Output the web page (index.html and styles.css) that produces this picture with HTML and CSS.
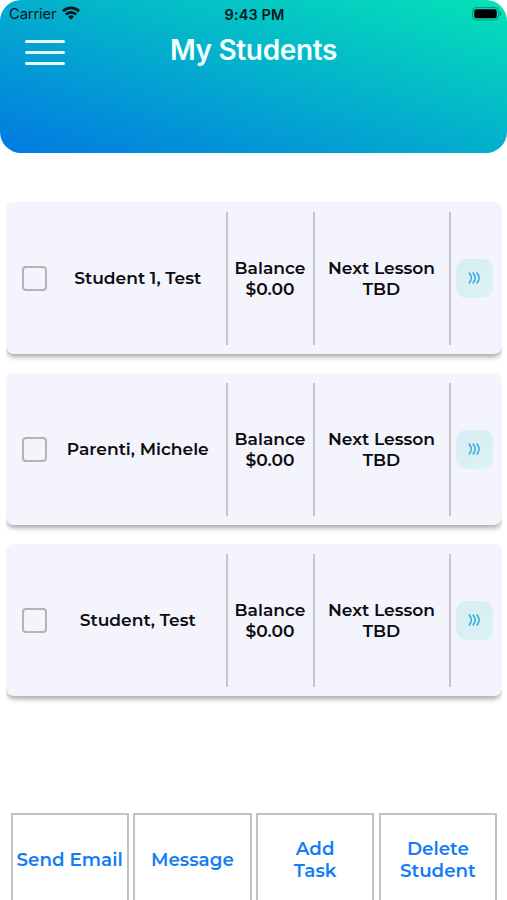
FILE: index.html
```html
<!DOCTYPE html>
<html lang="en">
<head>
<meta charset="utf-8">
<title>My Students</title>
<link rel="stylesheet" href="styles.css">
</head>
<body>
<header class="header">
  <div class="status">
    <div class="carrier"><span class="carrier-name">Carrier</span>
      <svg class="wifi" width="18" height="14" viewBox="0 0 18 14"><g fill="none" stroke="#02181d" stroke-width="2.8"><path d="M.9 5.2a11.5 11.5 0 0 1 16.2 0"/><path d="M3.9 8.5a7.2 7.2 0 0 1 10.2 0"/></g><path d="M9 13.8 6.1 10.8a4.1 4.1 0 0 1 5.8 0z" fill="#02181d"/></svg>
    </div>
    <time class="time">9:43 PM</time>
    <svg class="battery" width="30" height="14" viewBox="0 0 30 14"><rect x=".6" y=".6" width="25.8" height="12.4" rx="3.5" fill="none" stroke="#087f69" stroke-opacity=".75"/><rect x="2.3" y="2.3" width="22.4" height="9" rx="2" fill="#000"/><path d="M27.8 4.6v4.6q1.6-.7 1.6-2.3t-1.6-2.3z" fill="#087f69"/></svg>
  </div>
  <div class="titlebar">
    <button class="menu" aria-label="Menu"><i></i><i></i><i></i></button>
    <h1 class="title">My Students</h1>
  </div>
</header>
<main class="students">
  <article class="card">
    <div class="person"><span class="check"></span><span class="name">Student 1, Test</span></div>
    <div class="cell"><span>Balance</span><span>$0.00</span></div>
    <div class="cell"><span>Next Lesson</span><span>TBD</span></div>
    <div class="cell last"><button class="open" aria-label="Open"><svg width="13" height="12" viewBox="0 0 13 12" fill="none" stroke-width="1.6"><path d="M1 .5 3 4.2Q3.7 6 3 7.8L1 11.5" stroke="#45a9e4"/><path d="M4.9.5l2 3.7q.7 1.8 0 3.6l-2 3.7" stroke="#2bb7d5"/><path d="M8.8.5l2 3.7q.7 1.8 0 3.6l-2 3.7" stroke="#3aade2"/></svg></button></div>
  </article>
  <article class="card">
    <div class="person"><span class="check"></span><span class="name">Parenti, Michele</span></div>
    <div class="cell"><span>Balance</span><span>$0.00</span></div>
    <div class="cell"><span>Next Lesson</span><span>TBD</span></div>
    <div class="cell last"><button class="open" aria-label="Open"><svg width="13" height="12" viewBox="0 0 13 12" fill="none" stroke-width="1.6"><path d="M1 .5 3 4.2Q3.7 6 3 7.8L1 11.5" stroke="#45a9e4"/><path d="M4.9.5l2 3.7q.7 1.8 0 3.6l-2 3.7" stroke="#2bb7d5"/><path d="M8.8.5l2 3.7q.7 1.8 0 3.6l-2 3.7" stroke="#3aade2"/></svg></button></div>
  </article>
  <article class="card">
    <div class="person"><span class="check"></span><span class="name">Student, Test</span></div>
    <div class="cell"><span>Balance</span><span>$0.00</span></div>
    <div class="cell"><span>Next Lesson</span><span>TBD</span></div>
    <div class="cell last"><button class="open" aria-label="Open"><svg width="13" height="12" viewBox="0 0 13 12" fill="none" stroke-width="1.6"><path d="M1 .5 3 4.2Q3.7 6 3 7.8L1 11.5" stroke="#45a9e4"/><path d="M4.9.5l2 3.7q.7 1.8 0 3.6l-2 3.7" stroke="#2bb7d5"/><path d="M8.8.5l2 3.7q.7 1.8 0 3.6l-2 3.7" stroke="#3aade2"/></svg></button></div>
  </article>
</main>
<nav class="actions">
  <button class="action"><span>Send Email</span></button>
  <button class="action"><span>Message</span></button>
  <button class="action"><span>Add</span><span>Task</span></button>
  <button class="action"><span>Delete</span><span>Student</span></button>
</nav>
</body>
</html>
```
FILE: styles.css
```css
* { box-sizing: border-box; }
body {
  margin: 0;
  height: 900px;
  overflow: hidden;
  display: flex;
  flex-direction: column;
  background: #fff;
  font-family: Montserrat, Inter, sans-serif;
}
button { margin: 0; padding: 0; border: 0; background: none; font: inherit; }
.header {
  flex: none;
  height: 153px;
  border-radius: 21px;
  background: linear-gradient(to top right, #0279e2, #05e3b8);
  font-family: Inter, sans-serif;
}
.status {
  height: 28px;
  padding: 0 5px 0 9px;
  display: grid;
  grid-template-columns: 1fr auto 1fr;
  align-items: center;
  color: #02181d;
}
.carrier { display: flex; align-items: center; gap: 6px; }
.carrier-name { font-size: 14.7px; letter-spacing: -.1px; }
.wifi { margin: -2px 0 0; }
.time { margin-left: -2px; font-size: 14.5px; font-weight: 600; letter-spacing: .1px; }
.battery { justify-self: end; margin-top: -1px; }
.titlebar {
  height: 48px;
  padding: 0 25px;
  display: grid;
  grid-template-columns: 40px 1fr 40px;
  align-items: center;
}
.menu { display: flex; flex-direction: column; gap: 8px; }
.menu i { height: 3px; border-radius: 2px; background: #e3faff; }
.title {
  margin: -5px 0 0;
  text-align: center;
  font-size: 28px;
  line-height: 36px;
  font-weight: 600;
  letter-spacing: -.35px;
  color: #f4ffff;
}
.students {
  margin-top: 49px;
  padding: 0 5px 0 6px;
  display: flex;
  flex-direction: column;
  gap: 19px;
}
.card {
  height: 152px;
  padding: 10px 0 9px;
  border-radius: 8px;
  display: grid;
  grid-template-columns: 219.5px 87px 136px 1fr;
  background: #f4f4fc;
  box-shadow: 0 4px 5px -1px #aaa;
  clip-path: inset(0 0 -12px);
  color: #0c0c10;
  font-size: 17.1px;
  line-height: 21px;
  font-weight: 600;
}
.person { display: grid; grid-template-columns: 44px 1fr; align-items: center; }
.check {
  margin-left: 15.5px;
  width: 25px;
  height: 25px;
  border: 2px solid #b4b4b8;
  border-radius: 4px;
}
.name { padding-bottom: 2px; text-align: center; white-space: nowrap; }
.cell {
  padding-bottom: 2px;
  border-left: 2px solid #c4c4ca;
  display: flex;
  flex-direction: column;
  align-items: center;
  justify-content: center;
  white-space: nowrap;
}
.last { padding-bottom: 1px; }
.open {
  width: 37px;
  height: 39px;
  margin-right: 4px;
  border-radius: 11px;
  background: linear-gradient(135deg, #d8ecf4, #daf4f2);
  display: flex;
  align-items: center;
  justify-content: center;
}
.actions {
  margin: auto 10px 0 10.5px;
  height: 87px;
  flex: none;
  display: grid;
  grid-template-columns: repeat(4, 1fr);
  gap: 4.5px;
}
.action {
  height: 93px;
  border: 2px solid #c2c2c2;
  display: flex;
  flex-direction: column;
  align-items: center;
  justify-content: center;
  color: #147df5;
  font-size: 18.3px;
  line-height: 22px;
  font-weight: 600;
  white-space: nowrap;
}
```
